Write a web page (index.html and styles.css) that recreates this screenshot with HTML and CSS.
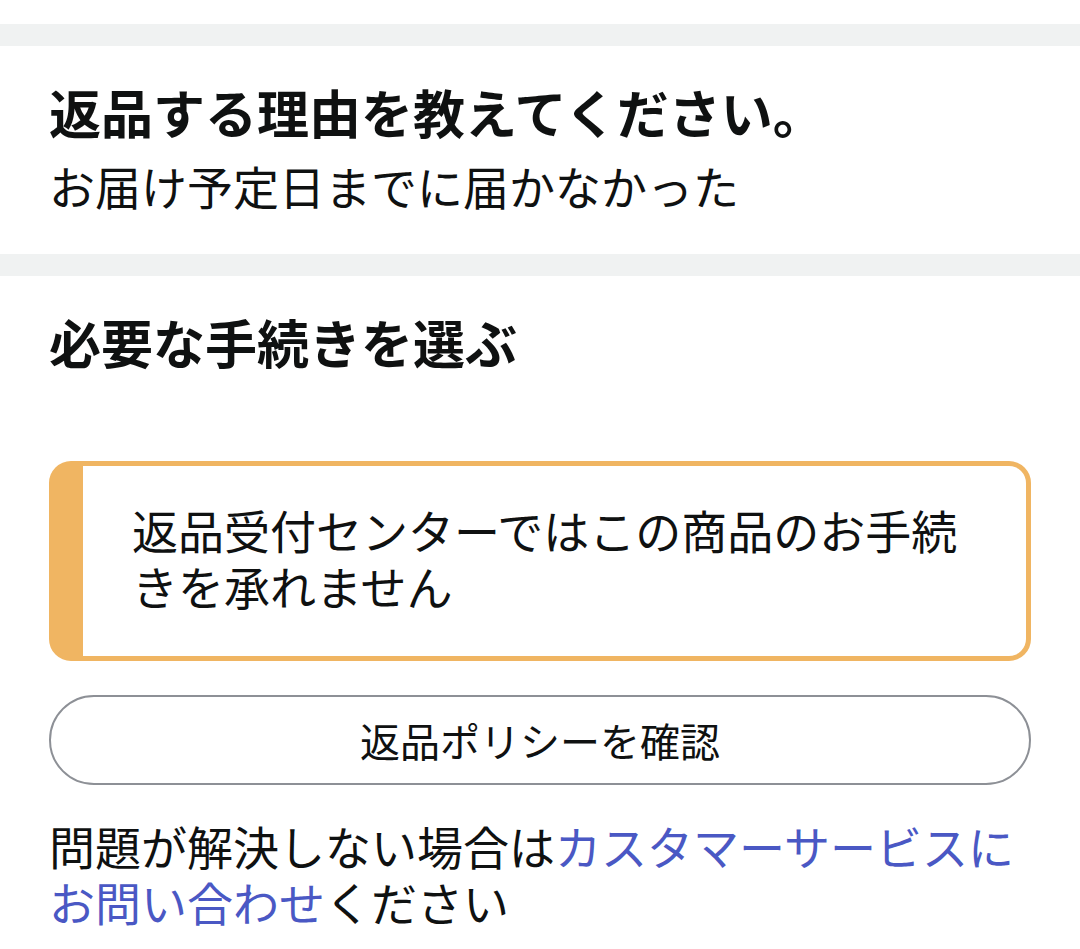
FILE: index.html
```html
<!DOCTYPE html>
<html lang="ja">
<head>
<meta charset="utf-8">
<title>返品</title>
<link rel="stylesheet" href="styles.css">
</head>
<body>
<div class="top-space"></div>
<div class="band"></div>
<section class="section reason">
  <h2 class="heading">返品する理由を教えてください。</h2>
  <p class="reason-text">お届け予定日までに届かなかった</p>
</section>
<div class="band"></div>
<section class="section actions">
  <h2 class="heading">必要な手続きを選ぶ</h2>
  <div class="alert">
    <p class="alert-text">返品受付センターではこの商品のお手続きを承れません</p>
  </div>
  <a class="pill-button" href="#">返品ポリシーを確認</a>
  <p class="help-text">問題が解決しない場合は<a class="link" href="#">カスタマーサービスにお問い合わせ</a>ください</p>
</section>
</body>
</html>
```
FILE: styles.css
```css
html, body {
  margin: 0;
  padding: 0;
  background: #ffffff;
}
body {
  font-family: "Noto Sans CJK JP", "Noto Sans", sans-serif;
  color: #0f1111;
  width: 1080px;
}
.top-space {
  height: 24px;
}
.band {
  height: 22px;
  background: #f0f2f2;
}
.section {
  padding: 0 49px;
}
.reason {
  padding-top: 34px;
  padding-bottom: 37px;
}
.heading {
  margin: 0;
  font-size: 52px;
  font-weight: 700;
  line-height: 64px;
}
.reason-text {
  margin: 9px 0 0;
  font-size: 46px;
  line-height: 64px;
}
.actions {
  padding-top: 34px;
}
.alert {
  margin-top: 87px;
  border: 5px solid #f0b562;
  border-left-width: 34px;
  border-radius: 22px;
  padding: 35px 44px 43px 49px;
}
.alert-text {
  margin: 0;
  font-size: 46px;
  line-height: 56px;
}
.pill-button {
  margin-top: 34px;
  height: 90px;
  box-sizing: border-box;
  border: 2px solid #8d9096;
  border-radius: 45px;
  display: flex;
  align-items: center;
  justify-content: center;
  font-size: 40px;
  color: #0f1111;
  text-decoration: none;
}
.help-text {
  margin: 32px 0 0;
  font-size: 46px;
  line-height: 56px;
}
.link {
  color: #4a58c4;
  text-decoration: none;
}
```
